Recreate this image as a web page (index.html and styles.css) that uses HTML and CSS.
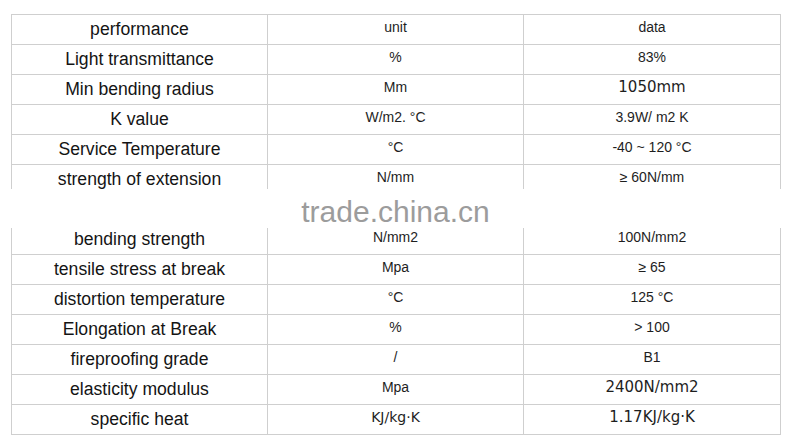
FILE: index.html
```html
<!DOCTYPE html>
<html lang="en">
<head>
<meta charset="utf-8">
<title>Performance data</title>
<link rel="stylesheet" href="styles.css">
</head>
<body>
<div class="sheet" role="table">
  <div class="c name">performance</div><div class="c val">unit</div><div class="c val">data</div>
  <div class="c name">Light transmittance</div><div class="c val">%</div><div class="c val">83%</div>
  <div class="c name">Min bending radius</div><div class="c val">Mm</div><div class="c val v">1050mm</div>
  <div class="c name">K value</div><div class="c val">W/m2. °C</div><div class="c val">3.9W/ m2 K</div>
  <div class="c name">Service Temperature</div><div class="c val">°C</div><div class="c val">-40 ~ 120 °C</div>
  <div class="c name">strength of extension</div><div class="c val">N/mm</div><div class="c val">≥ 60N/mm</div>
  <div class="c name"></div><div class="c val"></div><div class="c val"></div>
  <div class="c name">bending strength</div><div class="c val">N/mm2</div><div class="c val">100N/mm2</div>
  <div class="c name">tensile stress at break</div><div class="c val">Mpa</div><div class="c val">≥ 65</div>
  <div class="c name">distortion temperature</div><div class="c val">°C</div><div class="c val">125 °C</div>
  <div class="c name">Elongation at Break</div><div class="c val">%</div><div class="c val">&gt; 100</div>
  <div class="c name">fireproofing grade</div><div class="c val">/</div><div class="c val">B1</div>
  <div class="c name">elasticity modulus</div><div class="c val">Mpa</div><div class="c val v">2400N/mm2</div>
  <div class="c name">specific heat</div><div class="c val v sm">KJ/kg·K</div><div class="c val v">1.17KJ/kg·K</div>
</div>
<div class="watermark">trade.china.cn</div>
</body>
</html>
```
FILE: styles.css
```css
html, body {
  margin: 0;
  padding: 0;
  background: #fff;
}
body {
  position: relative;
  width: 789px;
  height: 440px;
  overflow: hidden;
  font-family: "Liberation Sans", Arial, sans-serif;
  color: #1e1e1e;
}
.sheet {
  display: grid;
  grid-template-columns: 255px 255px 256px;
  grid-auto-rows: 29px;
  gap: 1px;
  padding: 1px;
  background: #cfcfcf;
  width: max-content;
  margin: 14px 0 0 11px;
}
.c {
  background: #fff;
  text-align: center;
  white-space: nowrap;
  overflow: hidden;
}
.name {
  font-size: 17.6px;
  line-height: 29px;
  color: #141414;
}
.val {
  font-size: 14px;
  line-height: 24px;
  color: #1e1e1e;
}
.val.v {
  font-family: "DejaVu Sans", Verdana, sans-serif;
  font-size: 15px;
}
.val.v.sm {
  font-size: 14px;
}
.watermark {
  position: absolute;
  left: 0;
  top: 189px;
  width: 787px;
  height: 36px;
  padding: 3px 0 0 2px;
  background: #fff;
  text-align: center;
  font-size: 30px;
  line-height: 39px;
  color: #9c9c9c;
}
```
